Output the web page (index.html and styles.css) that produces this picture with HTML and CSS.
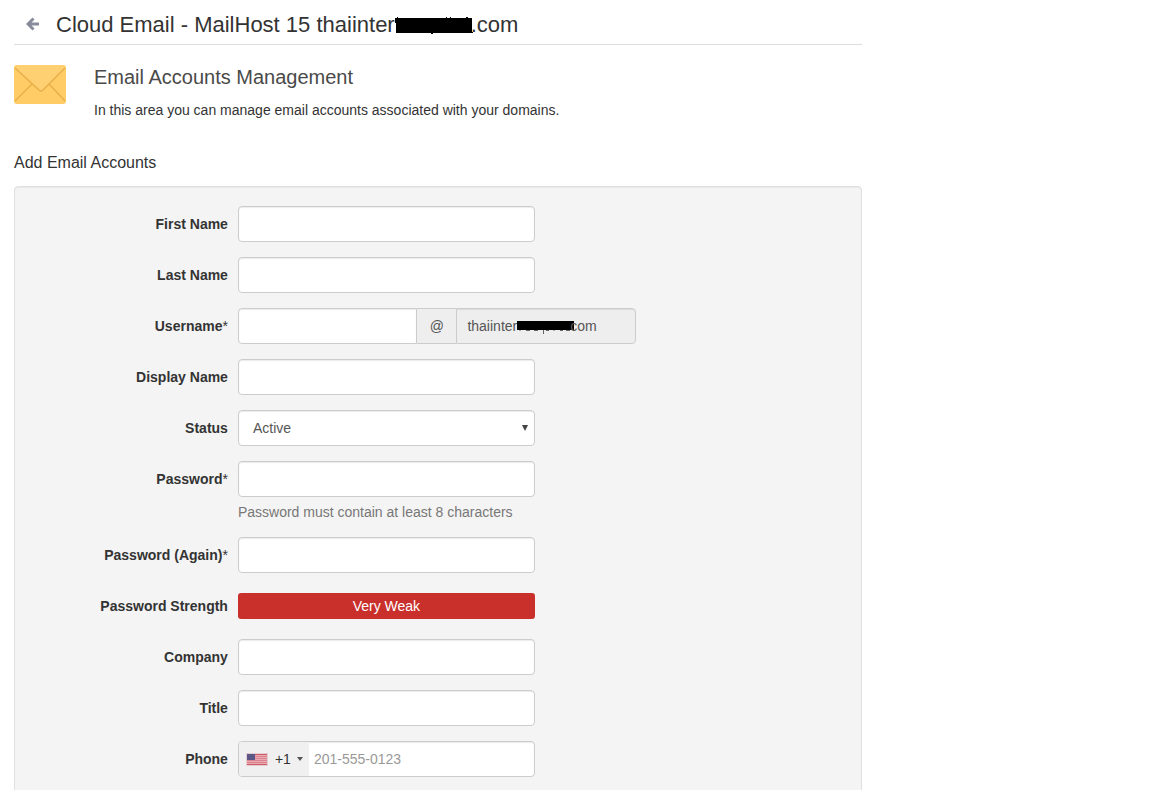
FILE: index.html
```html
<!DOCTYPE html>
<html lang="en">
<head>
    <meta charset="UTF-8">
    <meta name="viewport" content="width=device-width, initial-scale=1.0">
    <title>Email Accounts Management</title>
    <link rel="stylesheet" href="styles.css">
</head>
<body>
    <div class="container">
        <header class="page-header">
            <a href="#" class="back" aria-label="Back">
                <svg width="13" height="14" viewBox="0 0 13 14"><path d="M7.500 1.500L2 7l5.500 5.500M2.500 7H13" fill="none" stroke="#878b9a" stroke-width="3"/></svg>
            </a>
            <h1>Cloud Email - MailHost 15 thaiinter<svg class="mask-title" width="78" height="18" viewBox="0 0 78 18"><path d="M0 1h2V0h1v1h48V0h1v1h3V0h1v1h15V0h2v1h4v14h1v1H38v1h-2v-1H1V6H0z"/></svg>.com</h1>
        </header>

        <section class="intro">
            <svg class="envelope" width="52" height="39" viewBox="0 0 52 39">
                <rect width="52" height="39" rx="3" fill="#ffcc66"/>
                <path d="M1 2L25 25q2 2 4 0L51 2Q50 0 48 0H4Q2 0 1 2z" fill="#ffd072"/>
                <path d="M1 3l24 22q2 2 4 0L51 3M1 36l17-17M51 36L35 19" fill="none" stroke="#e8b04a" stroke-width="1.500"/>
            </svg>
            <div>
                <h2>Email Accounts Management</h2>
                <p>In this area you can manage email accounts associated with your domains.</p>
            </div>
        </section>

        <h3>Add Email Accounts</h3>
        <form class="well">
            <div class="form-group">
                <label for="firstname">First Name</label>
                <div class="field"><input type="text" id="firstname" class="form-control"></div>
            </div>
            <div class="form-group">
                <label for="lastname">Last Name</label>
                <div class="field"><input type="text" id="lastname" class="form-control"></div>
            </div>
            <div class="form-group">
                <label for="username">Username<span>*</span></label>
                <div class="field field-wide input-group">
                    <input type="text" id="username" class="form-control">
                    <span class="addon">@</span>
                    <div class="form-control domain">thaiinter<svg class="mask-domain" width="57" height="14" viewBox="0 0 57 14"><path d="M0 1h57v9H0z"/><path d="M3 10v1M9 10.500h4M17 10.500h4M26.500 10v4M29 10.500h3M37 10v1M43 10.500h3M49 10.500h4" stroke="#666"/></svg>com</div>
                </div>
            </div>
            <div class="form-group">
                <label for="displayname">Display Name</label>
                <div class="field"><input type="text" id="displayname" class="form-control"></div>
            </div>
            <div class="form-group">
                <label for="status">Status</label>
                <div class="field select-wrap">
                    <select id="status" class="form-control">
                        <option>Active</option>
                        <option>Suspended</option>
                    </select>
                    <svg class="arrow" width="6" height="6" viewBox="0 0 6 6"><path d="M0 0h6L3 6z" fill="#444"/></svg>
                </div>
            </div>
            <div class="form-group">
                <label for="password">Password<span>*</span></label>
                <div class="field">
                    <input type="password" id="password" class="form-control">
                    <p class="help-block">Password must contain at least 8 characters</p>
                </div>
            </div>
            <div class="form-group">
                <label for="password2">Password (Again)<span>*</span></label>
                <div class="field"><input type="password" id="password2" class="form-control"></div>
            </div>
            <div class="form-group">
                <label for="strength">Password Strength</label>
                <div class="field"><output id="strength" class="strength">Very Weak</output></div>
            </div>
            <div class="form-group">
                <label for="company">Company</label>
                <div class="field"><input type="text" id="company" class="form-control"></div>
            </div>
            <div class="form-group">
                <label for="title">Title</label>
                <div class="field"><input type="text" id="title" class="form-control"></div>
            </div>
            <div class="form-group">
                <label for="phone">Phone</label>
                <div class="field form-control phone">
                    <button type="button" class="country" aria-label="Country code +1">
                        <svg width="22" height="13" viewBox="0 0 22 13">
                            <rect width="22" height="13" fill="#e5cdd2"/>
                            <path d="M1 1h20v11H1z" fill="#eba9b2"/>
                            <path d="M1 3.500h20M1 5.500h20M1 7.500h20M1 9.500h20" stroke="#d98490"/>
                            <path d="M1 1.500h20M1 11.500h20" stroke="#ce5b68"/>
                            <path d="M1 1h8v6H1z" fill="#5a5786"/>
                        </svg>
                        <span>+1</span>
                        <svg width="6" height="4" viewBox="0 0 6 4"><path d="M0 0h6L3 4z" fill="#555"/></svg>
                    </button>
                    <input type="tel" id="phone" placeholder="201-555-0123">
                </div>
            </div>
        </form>
    </div>
</body>
</html>
```
FILE: styles.css
```css
* {
    box-sizing: border-box;
}
body {
    margin: 0;
    background-color: #fff;
    color: #333;
    font-family: "Liberation Sans", Arial, sans-serif;
    font-size: 14px;
    line-height: 20px;
}
.container {
    max-width: 848px;
    margin: 0 14px;
}
h1, h2, h3, p {
    margin: 0;
    font-weight: normal;
}
svg {
    flex: none;
}
.page-header {
    display: flex;
    align-items: center;
    gap: 17px;
    height: 45px;
    padding: 4px 0 0 12px;
    border-bottom: 1px solid #ddd;
}
.back {
    display: flex;
}
h1 {
    padding-top: 2px;
    font-size: 22px;
    line-height: 30px;
}
.mask-title {
    margin-right: -2px;
    vertical-align: -3px;
}
.intro {
    display: flex;
    align-items: flex-start;
    gap: 28px;
    padding-top: 20px;
}
h2 {
    margin-bottom: 11px;
    color: #4a4a4a;
    font-size: 20px;
    line-height: 24px;
}
h3 {
    margin: 33px 0 13px;
    font-size: 16px;
    line-height: 20px;
}

/* form */
.well {
    padding: 19px;
    background-color: #f4f4f4;
    border: 1px solid #e0e0e0;
    border-radius: 4px;
    box-shadow: inset 0 1px 1px rgba(0, 0, 0, 0.05);
}
.form-group {
    display: flex;
    gap: 10px;
    margin-bottom: 15px;
}
.form-group label {
    flex: 0 0 24%;
    font-size: 14px;
    font-weight: bold;
    line-height: 36px;
    text-align: right;
}
.form-group label span {
    font-weight: normal;
}
.field {
    flex: 1;
    max-width: 297px;
}
.field-wide {
    max-width: 398px;
}
.form-control {
    display: block;
    width: 100%;
    height: 36px;
    padding: 6px 10px;
    background-color: #fff;
    border: 1px solid #ccc;
    border-radius: 4px;
    box-shadow: inset 0 1px 1px rgba(0, 0, 0, 0.08);
    color: #555;
    font-family: inherit;
    font-size: 14px;
}
.input-group {
    display: flex;
}
.input-group input {
    flex: 1;
    min-width: 0;
    border-radius: 4px 0 0 4px;
}
.addon {
    width: 39px;
    background-color: #eee;
    border: solid #ccc;
    border-width: 1px 0;
    color: #555;
    line-height: 34px;
    text-align: center;
}
.input-group .domain {
    flex: 1;
    background-color: #eee;
    border-radius: 0 4px 4px 0;
    line-height: 22px;
    white-space: nowrap;
}
.mask-domain {
    margin-right: -4px;
    vertical-align: -3px;
}
.select-wrap {
    position: relative;
}
select.form-control {
    appearance: none;
    padding: 6px 14px;
}
.arrow {
    position: absolute;
    top: 15px;
    right: 7px;
    pointer-events: none;
}
.help-block {
    margin-top: 5px;
    color: #777;
}
.strength {
    display: block;
    margin: 5px 0;
    background-color: #c9302c;
    border-radius: 3px;
    color: #fff;
    line-height: 26px;
    text-align: center;
}
.phone {
    display: flex;
    padding: 0;
    overflow: hidden;
}
.country {
    display: flex;
    align-items: center;
    width: 70px;
    padding: 0 0 0 7px;
    background-color: #f0f0f0;
    border: 0;
    color: #333;
    font-family: inherit;
    font-size: 14px;
    cursor: pointer;
}
.country span {
    margin: 0 6px 0 7px;
}
.phone input {
    flex: 1;
    min-width: 0;
    padding: 0 5px;
    background: none;
    border: 0;
    color: #555;
    font-family: inherit;
    font-size: 14px;
}
.phone input::placeholder {
    color: #999;
}
```
